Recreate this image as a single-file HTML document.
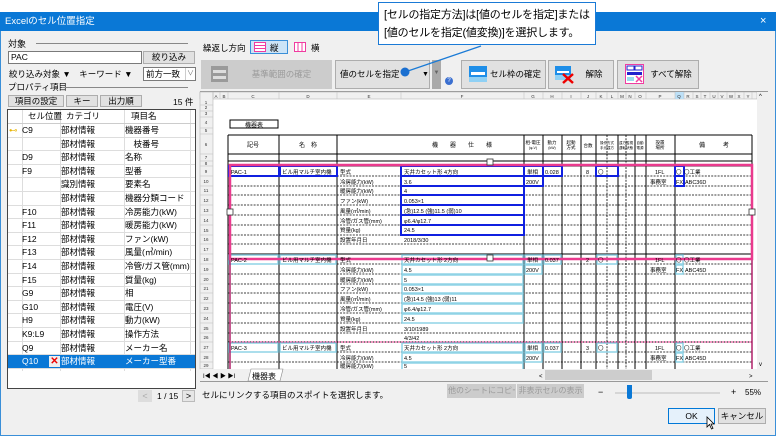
<!DOCTYPE html>
<html><head><meta charset="utf-8">
<style>
*{box-sizing:border-box;margin:0;padding:0}
body{width:776px;height:436px;overflow:hidden;background:#fff;font-family:"Liberation Sans","Noto Sans CJK JP",sans-serif;font-size:9px;color:#000;position:relative}
.a{position:absolute;white-space:nowrap}
.btn{position:absolute;background:#e1e1e1;border:1px solid #adadad;text-align:center;font-size:8.5px;line-height:11px;white-space:nowrap;overflow:hidden}
.lst{position:absolute;left:7px;top:109px;width:189px;height:280px;background:#fff;border:1px solid #444;overflow:hidden}
.row{position:absolute;left:0;width:187px;height:13.6px;border-bottom:1px solid #ddd;font-size:8.5px;line-height:13px}
.row span{position:absolute;top:0}
.c1{left:14px}.c2{left:53px}.c3{left:117px}
.vl{position:absolute;top:0;width:1px;height:261px;background:#ddd}
</style></head><body>
<div class="a" style="left:0;top:12px;width:776px;height:424px;background:#f0f0f0;border:1px solid #3a8fd8;border-top:none"></div>
<div class="a" style="left:0;top:12px;width:776px;height:19px;background:#0a78d6;color:#fff;font-size:9.5px;line-height:19px;padding-left:5px">Excelのセル位置指定</div>
<div class="a" style="left:760px;top:12px;color:#fff;font-size:11px;line-height:19px">×</div>

<div class="a" style="left:8px;top:37px">対象</div>
<div class="a" style="left:36px;top:43px;width:152px;height:1px;background:#888"></div>
<div class="a" style="left:8px;top:51px;width:134px;height:13px;background:#fff;border:1px solid #7a7a7a;font-size:8.5px;line-height:11px;padding-left:2px">PAC</div>
<div class="btn" style="left:143px;top:51px;width:52px;height:13px">絞り込み</div>
<div class="a" style="left:9px;top:68px;font-size:8.5px">絞り込み対象 ▼　キーワード ▼</div>
<div class="a" style="left:143px;top:67px;width:53px;height:14px;background:#fff;border:1px solid #7a7a7a;font-size:8.5px;line-height:12px;padding-left:2px">前方一致</div>
<div class="a" style="left:185px;top:68px;width:10px;height:12px;border-left:1px solid #ccc;font-size:7px;color:#777;text-align:center;line-height:12px">∨</div>
<div class="a" style="left:8px;top:81px;font-size:8.5px">プロパティ項目</div>
<div class="a" style="left:62px;top:87px;width:126px;height:1px;background:#888"></div>
<div class="btn" style="left:8px;top:95px;width:56px;height:12px">項目の設定</div>
<div class="btn" style="left:66px;top:95px;width:32px;height:12px">キー</div>
<div class="btn" style="left:100px;top:95px;width:42px;height:12px">出力順</div>
<div class="a" style="left:173px;top:96px;font-size:8.5px">15 件</div>
<div class="lst">
 <div class="vl" style="left:14px"></div><div class="vl" style="left:52px"></div><div class="vl" style="left:116px"></div><div class="vl" style="left:182px"></div>
 <div class="row" style="top:0;border-bottom:1px solid #ccc"><span class="c1" style="left:20px">セル位置</span><span class="c2" style="left:58px">カテゴリ</span><span class="c3" style="left:123px">項目名</span></div>
 <div class="row" style="top:14px"><span style="left:1px;color:#e8b400">⊷</span><span class="c1">C9</span><span class="c2">部材情報</span><span class="c3">機器番号</span></div>
 <div class="row" style="top:27.6px"><span class="c2">部材情報</span><span class="c3">　枝番号</span></div>
 <div class="row" style="top:41.2px"><span class="c1">D9</span><span class="c2">部材情報</span><span class="c3">名称</span></div>
 <div class="row" style="top:54.8px"><span class="c1">F9</span><span class="c2">部材情報</span><span class="c3">型番</span></div>
 <div class="row" style="top:68.4px"><span class="c2">識別情報</span><span class="c3">要素名</span></div>
 <div class="row" style="top:82px"><span class="c2">部材情報</span><span class="c3">機器分類コード</span></div>
 <div class="row" style="top:95.6px"><span class="c1">F10</span><span class="c2">部材情報</span><span class="c3">冷房能力(kW)</span></div>
 <div class="row" style="top:109.2px"><span class="c1">F11</span><span class="c2">部材情報</span><span class="c3">暖房能力(kW)</span></div>
 <div class="row" style="top:122.8px"><span class="c1">F12</span><span class="c2">部材情報</span><span class="c3">ファン(kW)</span></div>
 <div class="row" style="top:136.4px"><span class="c1">F13</span><span class="c2">部材情報</span><span class="c3">風量(㎥/min)</span></div>
 <div class="row" style="top:150px"><span class="c1">F14</span><span class="c2">部材情報</span><span class="c3">冷管/ガス管(mm)</span></div>
 <div class="row" style="top:163.6px"><span class="c1">F15</span><span class="c2">部材情報</span><span class="c3">質量(kg)</span></div>
 <div class="row" style="top:177.2px"><span class="c1">G9</span><span class="c2">部材情報</span><span class="c3">相</span></div>
 <div class="row" style="top:190.8px"><span class="c1">G10</span><span class="c2">部材情報</span><span class="c3">電圧(V)</span></div>
 <div class="row" style="top:204.4px"><span class="c1">H9</span><span class="c2">部材情報</span><span class="c3">動力(kW)</span></div>
 <div class="row" style="top:218px"><span class="c1">K9:L9</span><span class="c2">部材情報</span><span class="c3">操作方法</span></div>
 <div class="row" style="top:231.6px"><span class="c1">Q9</span><span class="c2">部材情報</span><span class="c3">メーカー名</span></div>
 <div class="row" style="top:245.2px;background:#0a78d6;color:#fff"><span class="c1">Q10</span><span style="left:41px;top:1px;width:11px;height:11px;background:#eee;color:#e00;font-size:10px;line-height:11px;text-align:center;font-weight:bold">✕</span><span class="c2">部材情報</span><span class="c3">メーカー型番</span></div>
</div>
<div class="a" style="left:138px;top:390px;width:14px;height:12px;background:#ddd;color:#aaa;text-align:center;line-height:12px">&lt;</div>
<div class="a" style="left:157px;top:391px;font-size:8.5px">1 / 15</div>
<div class="a" style="left:182px;top:390px;width:13px;height:12px;background:#e6e6e6;border:1px solid #bbb;text-align:center;line-height:10px">&gt;</div>

<div class="a" style="left:203px;top:42px;font-size:8.5px">繰返し方向</div>
<div class="a" style="left:250px;top:40px;width:38px;height:14px;background:#cce4f7;border:1px solid #3a8fd8"></div>
<svg class="a" style="left:254px;top:42px" width="12" height="10"><rect x="0.5" y="0.5" width="11" height="9" fill="#fff" stroke="#f03ca0"/><line x1="1" y1="3.5" x2="11" y2="3.5" stroke="#f03ca0"/><line x1="1" y1="6.5" x2="11" y2="6.5" stroke="#f03ca0"/></svg>
<div class="a" style="left:270px;top:42px;font-size:8.5px">縦</div>
<svg class="a" style="left:294px;top:42px" width="12" height="10"><rect x="0.5" y="0.5" width="11" height="9" fill="#fff" stroke="#f03ca0"/><line x1="4" y1="1" x2="4" y2="9" stroke="#f03ca0"/><line x1="8" y1="1" x2="8" y2="9" stroke="#f03ca0"/></svg>
<div class="a" style="left:311px;top:42px;font-size:8.5px">横</div>

<div class="btn" style="left:201px;top:60px;width:131px;height:29px;background:#ccc;border-color:#ccc;color:#999;line-height:27px;padding-left:30px">基準範囲の確定</div>
<svg class="a" style="left:211px;top:66px" width="17" height="16"><rect width="17" height="16" fill="#9a9a9a"/><rect x="2" y="4" width="13" height="3" fill="#ddd"/><rect x="2" y="10" width="13" height="3" fill="#ddd"/></svg>
<div class="btn" style="left:335px;top:60px;width:95px;height:29px;text-align:left;line-height:27px;padding-left:4px">値のセルを指定<span style="position:absolute;left:86px;font-size:7px">▼</span></div>
<div class="a" style="left:432px;top:60px;width:9px;height:29px;background:#aaa;color:#666;font-size:6px;text-align:center;line-height:27px">▼</div>
<div class="a" style="left:445px;top:77px;width:8px;height:8px;border-radius:50%;background:#3a6fd0;color:#fff;font-size:6px;text-align:center;line-height:8px">?</div>
<div class="btn" style="left:461px;top:60px;width:85px;height:29px;line-height:27px;padding-left:24px">セル枠の確定</div>
<svg class="a" style="left:469px;top:66px" width="18" height="16"><rect width="18" height="16" fill="#1e8ee8"/><rect y="11" width="18" height="5" fill="#8fd0f4"/><rect x="2" y="6" width="14" height="3" fill="#fff"/></svg>
<div class="btn" style="left:548px;top:60px;width:66px;height:29px;line-height:27px;padding-left:26px">解除</div>
<svg class="a" style="left:555px;top:66px" width="20" height="18"><rect width="16" height="14" fill="#1e8ee8"/><rect y="9" width="16" height="5" fill="#8fd0f4"/><rect x="2" y="5" width="12" height="2" fill="#fff"/><path d="M8 8L18 17M18 8L8 17" stroke="#e00" stroke-width="2.5"/></svg>
<div class="btn" style="left:617px;top:60px;width:82px;height:29px;line-height:27px;padding-left:26px">すべて解除</div>
<svg class="a" style="left:625px;top:64px" width="19" height="20"><rect x="0.5" y="0.5" width="18" height="19" fill="#fff" stroke="#f03ca0"/><rect x="2" y="2" width="7" height="4" fill="none" stroke="#22c"/><rect x="10" y="2" width="7" height="4" fill="none" stroke="#22c"/><rect x="2" y="8" width="15" height="3" fill="#22c"/><rect x="2" y="13" width="7" height="4" fill="#9de"/><path d="M11 12L17 18M17 12L11 18" stroke="#f03ca0" stroke-width="1.5"/></svg>

<div class="a" style="left:200px;top:91px;width:568px;height:291px;background:#fff;border:1px solid #999"></div>
<svg class="a" style="left:0;top:0" width="776" height="436" font-family="Liberation Sans, Noto Sans CJK JP, sans-serif">
<rect x="200" y="92" width="557" height="7" fill="#f0f0f0" stroke="#aaa" stroke-width=".5"/>
<rect x="200" y="92" width="13" height="277" fill="#f0f0f0" stroke="#aaa" stroke-width=".5"/>
<rect x="675" y="92" width="9" height="7" fill="#bde0f7"/>
<g stroke="#bbb" stroke-width=".5">
<path d="M213 92V99M220 92V99M228 92V99M279 92V99M337 92V99M401 92V99M524 92V99M543 92V99M562 92V99M581 92V99M596 92V99M607 92V99M618 92V99M626 92V99M635 92V99M646 92V99M675 92V99M684 92V99M693 92V99M701 92V99M710 92V99M718 92V99M727 92V99M735 92V99M744 92V99M752 92V99"/>
<path d="M200 105H213M200 111H213M200 117H213M200 128H213M200 134H213M200 154H213M200 161H213M200 166H213M200 176H213M200 186H213M200 195H213M200 205H213M200 215H213M200 225H213M200 235H213M200 244H213M200 254H213M200 264H213M200 274H213M200 284H213M200 293H213M200 303H213M200 313H213M200 323H213M200 333H213M200 342H213M200 352H213M200 362H213"/>
</g>
<g font-size="4.5" fill="#333" text-anchor="middle">
<text x="216" y="98">A</text><text x="224" y="98">B</text><text x="253" y="98">C</text><text x="308" y="98">D</text><text x="369" y="98">E</text><text x="462" y="98">F</text><text x="533" y="98">G</text><text x="552" y="98">H</text><text x="571" y="98">I</text><text x="588" y="98">J</text><text x="601" y="98">K</text><text x="612" y="98">L</text><text x="622" y="98">M</text><text x="630" y="98">N</text><text x="640" y="98">O</text><text x="660" y="98">P</text><text x="679" y="98">Q</text><text x="688" y="98">R</text><text x="697" y="98">S</text><text x="705" y="98">T</text><text x="714" y="98">U</text><text x="722" y="98">V</text><text x="731" y="98">W</text><text x="739" y="98">X</text><text x="748" y="98">Y</text>
<text x="206" y="104">1</text><text x="206" y="109">2</text><text x="206" y="115">3</text><text x="206" y="124">4</text><text x="206" y="132">5</text><text x="206" y="146">6</text><text x="206" y="159">7</text><text x="206" y="165">8</text>
<text x="206" y="173">9</text><text x="206" y="183">10</text><text x="206" y="192">11</text><text x="206" y="202">12</text><text x="206" y="212">13</text><text x="206" y="222">14</text><text x="206" y="232">15</text><text x="206" y="241">16</text><text x="206" y="251">17</text><text x="206" y="261">18</text><text x="206" y="271">19</text><text x="206" y="281">20</text><text x="206" y="290">21</text><text x="206" y="300">22</text><text x="206" y="310">23</text><text x="206" y="320">24</text><text x="206" y="330">25</text><text x="206" y="339">26</text><text x="206" y="349">27</text><text x="206" y="359">28</text><text x="206" y="367">29</text>
</g>
<rect x="230" y="120" width="48" height="8" fill="none" stroke="#000" stroke-width="1"/>
<text x="254" y="127" font-size="6" text-anchor="middle">機器表</text>
<g stroke="#000" stroke-width=".8" stroke-dasharray="2 1.2">
<path d="M228 176H752M228 186H752M228 195H752M228 205H752M228 215H752M228 225H752M228 235H752M228 244H752M228 264H752M228 274H752M228 284H752M228 293H752M228 303H752M228 313H752M228 323H752M228 333H752M228 352H752M228 362H752"/>
<path d="M607 135V369M626 135V369"/>
</g>
<g stroke="#000" stroke-width="1">
<path d="M228 135H752M228 154H752M228 161H752M228 166H752M228 254H752M228 342H752"/>
<path d="M228 135V369M279 135V369M337 135V369M524 135V369M543 135V369M562 135V369M581 135V369M596 135V369M618 135V369M635 135V369M646 135V369M675 135V369M752 135V369"/>
</g>
<g font-size="6" text-anchor="middle">
<text x="253" y="147">記号</text><text x="308" y="147">名　称</text><text x="462" y="147">機　　器　　仕　　様</text>
<text x="533" y="144" font-size="4.5">相-電圧</text><text x="533" y="149" font-size="3.5">(φ-V)</text>
<text x="552" y="144" font-size="4.5">動力</text><text x="552" y="149" font-size="3.5">(kW)</text>
<text x="571" y="144" font-size="4.5">起動</text><text x="571" y="149" font-size="4.5">方式</text>
<text x="588" y="147" font-size="4.5">台数</text>
<text x="607" y="144" font-size="3.5">操作方式</text><text x="607" y="149" font-size="3.5">手元遠方</text>
<text x="626" y="144" font-size="3.5">遠方監視</text><text x="626" y="149" font-size="3.5">運転状態</text>
<text x="640" y="144" font-size="3.5">自動</text><text x="640" y="149" font-size="3.5">電源</text>
<text x="660" y="144" font-size="4.5">設置</text><text x="660" y="149" font-size="4.5">場所</text>
<text x="714" y="147">備　　　考</text>
</g>
<g fill="none" stroke="#8fd3e6" stroke-width="1.5">
<rect x="229" y="255" width="49" height="9"/><rect x="280" y="255" width="56" height="9"/><rect x="402" y="255" width="121" height="9"/><rect x="402" y="265" width="121" height="9"/><rect x="402" y="275" width="121" height="9"/><rect x="402" y="285" width="121" height="8"/><rect x="402" y="294" width="121" height="9"/><rect x="402" y="304" width="121" height="9"/><rect x="402" y="314" width="121" height="9"/><rect x="525" y="255" width="17" height="9"/><rect x="525" y="265" width="17" height="9"/><rect x="544" y="255" width="17" height="9"/><rect x="597" y="255" width="20" height="9"/><rect x="676" y="255" width="7" height="9"/><rect x="676" y="265" width="7" height="9"/>
<rect x="229" y="343" width="49" height="9"/><rect x="280" y="343" width="56" height="9"/><rect x="402" y="343" width="121" height="9"/><rect x="402" y="353" width="121" height="9"/><rect x="402" y="363" width="121" height="9"/><rect x="525" y="343" width="17" height="9"/><rect x="525" y="353" width="17" height="9"/><rect x="544" y="343" width="17" height="9"/><rect x="597" y="343" width="20" height="9"/><rect x="676" y="343" width="7" height="9"/><rect x="676" y="353" width="7" height="9"/>
</g>
<path d="M230 259V369M752 259V369" stroke="#b0206a" stroke-width="1.5"/>
<path d="M230 342H752" stroke="#e83a8e" stroke-width="1" stroke-dasharray="2 1"/>
<g fill="none" stroke="#1020e0" stroke-width="2">
<rect x="229" y="166" width="50" height="10"/><rect x="280" y="166" width="57" height="10"/><rect x="401" y="166" width="123" height="10"/><rect x="401" y="176" width="123" height="10"/><rect x="401" y="186" width="123" height="9"/><rect x="401" y="195" width="123" height="10"/><rect x="401" y="205" width="123" height="10"/><rect x="401" y="215" width="123" height="10"/><rect x="401" y="225" width="123" height="10"/><rect x="524" y="166" width="19" height="10"/><rect x="524" y="176" width="19" height="10"/><rect x="543" y="166" width="19" height="10"/><rect x="596" y="166" width="22" height="10"/><rect x="675" y="166" width="9" height="10"/><rect x="675" y="176" width="9" height="10"/>
</g>
<rect x="230" y="165" width="522" height="94" fill="none" stroke="#ea3a8e" stroke-width="2.5"/>
<g fill="#fff" stroke="#333" stroke-width=".8"><rect x="487" y="159" width="6" height="6"/><rect x="227" y="209" width="6" height="6"/><rect x="749" y="209" width="6" height="6"/><rect x="487" y="255" width="6" height="6"/></g>
<g font-size="5.5">
<text x="231" y="174">PAC-1</text><text x="282" y="174">ビル用マルチ室内機</text><text x="340" y="174">型式</text><text x="404" y="174">天井カセット形 4方向</text><text x="527" y="174">単相</text><text x="545" y="174">0.028</text><text x="586" y="174">8</text><text x="598" y="174">〇</text><text x="655" y="174">1FL</text><text x="676" y="174">〇</text><text x="684" y="174">〇工業</text>
<text x="340" y="184">冷房能力(kW)</text><text x="404" y="184">3.6</text><text x="526" y="184">200V</text><text x="650" y="184">事務室</text><text x="676" y="184">FX</text><text x="685" y="184">ABC36D</text>
<text x="340" y="193">暖房能力(kW)</text><text x="404" y="193">4</text>
<text x="340" y="203">ファン(kW)</text><text x="404" y="203">0.053×1</text>
<text x="340" y="213">風量(㎥/min)</text><text x="404" y="213">(急)12.5 (強)11.5 (弱)10</text>
<text x="340" y="223">冷管/ガス管(mm)</text><text x="404" y="223">φ6.4/φ12.7</text>
<text x="340" y="232">質量(kg)</text><text x="404" y="232">24.5</text>
<text x="340" y="242">設置年月日</text><text x="404" y="242">2018/3/30</text>
<text x="231" y="262">PAC-2</text><text x="282" y="262">ビル用マルチ室内機</text><text x="340" y="262">型式</text><text x="404" y="262">天井カセット形 2方向</text><text x="527" y="262">単相</text><text x="545" y="262">0.037</text><text x="586" y="262">2</text><text x="598" y="262">〇</text><text x="655" y="262">1FL</text><text x="676" y="262">〇</text><text x="684" y="262">〇工業</text>
<text x="340" y="272">冷房能力(kW)</text><text x="404" y="272">4.5</text><text x="526" y="272">200V</text><text x="650" y="272">事務室</text><text x="676" y="272">FX</text><text x="685" y="272">ABC45D</text>
<text x="340" y="282">暖房能力(kW)</text><text x="404" y="282">5</text>
<text x="340" y="291">ファン(kW)</text><text x="404" y="291">0.053×1</text>
<text x="340" y="301">風量(㎥/min)</text><text x="404" y="301">(急)14.5 (強)13 (弱)11</text>
<text x="340" y="311">冷管/ガス管(mm)</text><text x="404" y="311">φ6.4/φ12.7</text>
<text x="340" y="321">質量(kg)</text><text x="404" y="321">24.5</text>
<text x="340" y="331">設置年月日</text><text x="404" y="331">3/10/1989</text>
<text x="404" y="340">4/3/42</text>
<text x="231" y="350">PAC-3</text><text x="282" y="350">ビル用マルチ室内機</text><text x="340" y="350">型式</text><text x="404" y="350">天井カセット形 2方向</text><text x="527" y="350">単相</text><text x="545" y="350">0.037</text><text x="586" y="350">3</text><text x="598" y="350">〇</text><text x="655" y="350">1FL</text><text x="676" y="350">〇</text><text x="684" y="350">〇工業</text>
<text x="340" y="360">冷房能力(kW)</text><text x="404" y="360">4.5</text><text x="526" y="360">200V</text><text x="650" y="360">事務室</text><text x="676" y="360">FX</text><text x="685" y="360">ABC45D</text>
<text x="340" y="368">暖房能力(kW)</text><text x="404" y="368">5</text>
</g>
<rect x="757" y="92" width="11" height="277" fill="#f0f0f0"/>
<text x="759" y="98" font-size="6">^</text><text x="759" y="366" font-size="6">v</text>
<rect x="200" y="369" width="568" height="12" fill="#f0f0f0"/>
<text x="203" y="378" font-size="6">I◀ ◀ ▶ ▶I</text>
<path d="M248 381L251 369H283L280 381Z" fill="#fff" stroke="#888" stroke-width=".6"/>
<text x="252" y="379" font-size="8">機器表</text>
<rect x="545" y="370" width="107" height="10" fill="#cdcdcd"/>
<text x="539" y="378" font-size="6">&lt;</text><text x="749" y="378" font-size="6">&gt;</text>
<path d="M481 46L405 72" stroke="#1a7ad6" stroke-width="1.2"/>
<circle cx="405" cy="72" r="4.5" fill="#1a6fd0"/>
</svg>

<div class="a" style="left:202px;top:389px;font-size:8.5px">セルにリンクする項目のスポイトを選択します。</div>
<div class="btn" style="left:447px;top:384px;width:69px;height:14px;background:#ccc;border-color:#ccc;color:#999;font-size:8px">他のシートにコピー</div>
<div class="btn" style="left:517px;top:384px;width:67px;height:14px;background:#ccc;border-color:#ccc;color:#999;font-size:8px">非表示セルの表示</div>
<div class="a" style="left:598px;top:387px">−</div>
<div class="a" style="left:615px;top:392px;width:105px;height:2px;background:#d6d6d6"></div>
<div class="a" style="left:627px;top:385px;width:5px;height:14px;background:#0a78d6;border-radius:0 0 2px 2px"></div>
<div class="a" style="left:731px;top:387px">+</div>
<div class="a" style="left:745px;top:388px;font-size:8px">55%</div>
<div class="btn" style="left:668px;top:408px;width:47px;height:16px;background:#e5f1fb;border-color:#0078d7;line-height:14px">OK</div>
<div class="btn" style="left:718px;top:408px;width:48px;height:16px;line-height:14px">キャンセル</div>
<svg class="a" style="left:706px;top:416px" width="9" height="14"><path d="M1 1V11L3.5 8.5L5.5 13L7 12.3L5 8H8Z" fill="#fff" stroke="#000" stroke-width=".8"/></svg>

<div class="a" style="left:378px;top:2px;width:218px;height:43px;background:#fff;border:1.5px solid #1a7ad6;font-size:11px;line-height:18px;padding:3px 0 0 5px;letter-spacing:-0.2px">[セルの指定方法]は[値のセルを指定]または<br>[値のセルを指定(値変換)]を選択します。</div>
</body></html>
